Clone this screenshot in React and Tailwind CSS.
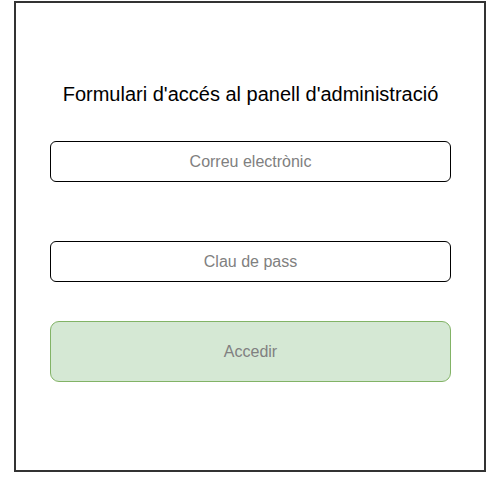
export default function App() {
  return (
    <div className="w-[501px] h-[480px] bg-white" style={{ fontFamily: '"Liberation Sans", Arial, sans-serif' }}>
      <div className="ml-[14px] mt-[1px] w-[472px] h-[471px] border-2 border-[#333333] flex flex-col pl-[34px] pr-[33px] pt-[79px]">
        <h1 className="text-[20px] leading-[24px] text-black text-center">Formulari d'accés al panell d'administració</h1>
        <input
          type="text"
          placeholder="Correu electrònic"
          className="mt-[35px] h-[41px] w-full border border-black rounded-[6px] text-center text-[16px] text-[#333] placeholder:text-[#808080] outline-none bg-white"
        />
        <input
          type="password"
          placeholder="Clau de pass"
          className="mt-[59px] h-[41px] w-full border border-black rounded-[6px] text-center text-[16px] text-[#333] placeholder:text-[#808080] outline-none bg-white"
        />
        <button
          type="button"
          className="mt-[39px] h-[61px] w-full border border-[#82b366] bg-[#d5e8d4] rounded-[9px] text-center text-[16px] text-[#808080]"
        >
          Accedir
        </button>
      </div>
    </div>
  );
}
